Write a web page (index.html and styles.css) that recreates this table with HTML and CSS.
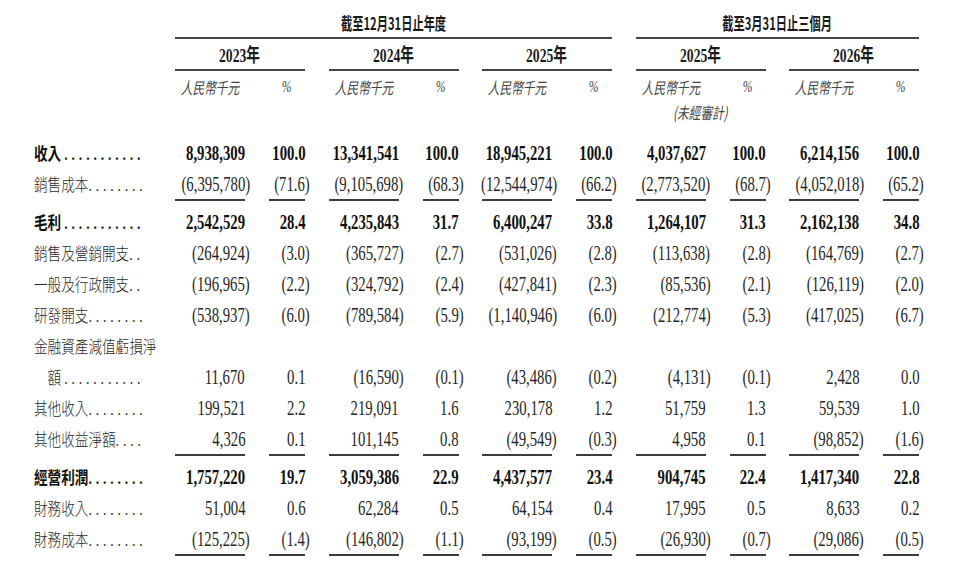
FILE: index.html
```html
<!DOCTYPE html>
<html>
  <head>
    <title>經營業績</title>
    <link rel="stylesheet" href="styles.css">
  </head>
  <body>
    <div class="sheet">
      <div class="row head-title">
        <div class="label"></div>
        <div class="title wide3"><span class="tt">截至12月31日止年度</span></div>
        <div class="title wide2"><span class="tt">截至3月31日止三個月</span></div>
      </div>
      <div class="row head-year">
        <div class="label"></div>
        <div class="year"><span class="yt">2023年</span></div>
        <div class="year"><span class="yt">2024年</span></div>
        <div class="year"><span class="yt">2025年</span></div>
        <div class="year"><span class="yt">2025年</span></div>
        <div class="year"><span class="yt">2026年</span></div>
      </div>
      <div class="row head-unit">
        <div class="label"></div>
        <div class="group"><div class="uh-amt"><span class="ut">人民幣千元</span></div><div class="uh-pct"><span class="ut pc">%</span></div></div>
        <div class="group"><div class="uh-amt"><span class="ut">人民幣千元</span></div><div class="uh-pct"><span class="ut pc">%</span></div></div>
        <div class="group"><div class="uh-amt"><span class="ut">人民幣千元</span></div><div class="uh-pct"><span class="ut pc">%</span></div></div>
        <div class="group"><div class="uh-amt"><span class="ut">人民幣千元</span></div><div class="uh-pct"><span class="ut pc">%</span></div></div>
        <div class="group"><div class="uh-amt"><span class="ut">人民幣千元</span></div><div class="uh-pct"><span class="ut pc">%</span></div></div>
      </div>
      <div class="row head-note">
        <div class="label"></div>
        <div class="note"></div>
        <div class="note"></div>
        <div class="note"></div>
        <div class="note"><span class="ut">(未經審計)</span></div>
        <div class="note"></div>
      </div>

      <div class="data">
        <div class="row b">
          <div class="label"><span class="lt">收入 <span class="dots">...........</span></span></div>
          <div class="group"><div class="amt"><span class="n">8,938,309</span></div><div class="pct"><span class="n">100.0</span></div></div>
          <div class="group"><div class="amt"><span class="n">13,341,541</span></div><div class="pct"><span class="n">100.0</span></div></div>
          <div class="group"><div class="amt"><span class="n">18,945,221</span></div><div class="pct"><span class="n">100.0</span></div></div>
          <div class="group"><div class="amt"><span class="n">4,037,627</span></div><div class="pct"><span class="n">100.0</span></div></div>
          <div class="group"><div class="amt"><span class="n">6,214,156</span></div><div class="pct"><span class="n">100.0</span></div></div>
        </div>
        <div class="row u">
          <div class="label"><span class="lt">銷售成本<span class="dots">........</span></span></div>
          <div class="group"><div class="amt"><span class="n">(6,395,780<span class="rp">)</span></span></div><div class="pct"><span class="n">(71.6<span class="rp">)</span></span></div></div>
          <div class="group"><div class="amt"><span class="n">(9,105,698<span class="rp">)</span></span></div><div class="pct"><span class="n">(68.3<span class="rp">)</span></span></div></div>
          <div class="group"><div class="amt"><span class="n">(12,544,974<span class="rp">)</span></span></div><div class="pct"><span class="n">(66.2<span class="rp">)</span></span></div></div>
          <div class="group"><div class="amt"><span class="n">(2,773,520<span class="rp">)</span></span></div><div class="pct"><span class="n">(68.7<span class="rp">)</span></span></div></div>
          <div class="group"><div class="amt"><span class="n">(4,052,018<span class="rp">)</span></span></div><div class="pct"><span class="n">(65.2<span class="rp">)</span></span></div></div>
        </div>
        <div class="row b">
          <div class="label"><span class="lt">毛利 <span class="dots">...........</span></span></div>
          <div class="group"><div class="amt"><span class="n">2,542,529</span></div><div class="pct"><span class="n">28.4</span></div></div>
          <div class="group"><div class="amt"><span class="n">4,235,843</span></div><div class="pct"><span class="n">31.7</span></div></div>
          <div class="group"><div class="amt"><span class="n">6,400,247</span></div><div class="pct"><span class="n">33.8</span></div></div>
          <div class="group"><div class="amt"><span class="n">1,264,107</span></div><div class="pct"><span class="n">31.3</span></div></div>
          <div class="group"><div class="amt"><span class="n">2,162,138</span></div><div class="pct"><span class="n">34.8</span></div></div>
        </div>
        <div class="row">
          <div class="label"><span class="lt">銷售及營銷開支<span class="dots">..</span></span></div>
          <div class="group"><div class="amt"><span class="n">(264,924<span class="rp">)</span></span></div><div class="pct"><span class="n">(3.0<span class="rp">)</span></span></div></div>
          <div class="group"><div class="amt"><span class="n">(365,727<span class="rp">)</span></span></div><div class="pct"><span class="n">(2.7<span class="rp">)</span></span></div></div>
          <div class="group"><div class="amt"><span class="n">(531,026<span class="rp">)</span></span></div><div class="pct"><span class="n">(2.8<span class="rp">)</span></span></div></div>
          <div class="group"><div class="amt"><span class="n">(113,638<span class="rp">)</span></span></div><div class="pct"><span class="n">(2.8<span class="rp">)</span></span></div></div>
          <div class="group"><div class="amt"><span class="n">(164,769<span class="rp">)</span></span></div><div class="pct"><span class="n">(2.7<span class="rp">)</span></span></div></div>
        </div>
        <div class="row">
          <div class="label"><span class="lt">一般及行政開支<span class="dots">..</span></span></div>
          <div class="group"><div class="amt"><span class="n">(196,965<span class="rp">)</span></span></div><div class="pct"><span class="n">(2.2<span class="rp">)</span></span></div></div>
          <div class="group"><div class="amt"><span class="n">(324,792<span class="rp">)</span></span></div><div class="pct"><span class="n">(2.4<span class="rp">)</span></span></div></div>
          <div class="group"><div class="amt"><span class="n">(427,841<span class="rp">)</span></span></div><div class="pct"><span class="n">(2.3<span class="rp">)</span></span></div></div>
          <div class="group"><div class="amt"><span class="n">(85,536<span class="rp">)</span></span></div><div class="pct"><span class="n">(2.1<span class="rp">)</span></span></div></div>
          <div class="group"><div class="amt"><span class="n">(126,119<span class="rp">)</span></span></div><div class="pct"><span class="n">(2.0<span class="rp">)</span></span></div></div>
        </div>
        <div class="row">
          <div class="label"><span class="lt">研發開支<span class="dots">........</span></span></div>
          <div class="group"><div class="amt"><span class="n">(538,937<span class="rp">)</span></span></div><div class="pct"><span class="n">(6.0<span class="rp">)</span></span></div></div>
          <div class="group"><div class="amt"><span class="n">(789,584<span class="rp">)</span></span></div><div class="pct"><span class="n">(5.9<span class="rp">)</span></span></div></div>
          <div class="group"><div class="amt"><span class="n">(1,140,946<span class="rp">)</span></span></div><div class="pct"><span class="n">(6.0<span class="rp">)</span></span></div></div>
          <div class="group"><div class="amt"><span class="n">(212,774<span class="rp">)</span></span></div><div class="pct"><span class="n">(5.3<span class="rp">)</span></span></div></div>
          <div class="group"><div class="amt"><span class="n">(417,025<span class="rp">)</span></span></div><div class="pct"><span class="n">(6.7<span class="rp">)</span></span></div></div>
        </div>
        <div class="row">
          <div class="label"><span class="lt">金融資產減值虧損淨</span></div>
        </div>
        <div class="row">
          <div class="label"><span class="lt">　額 <span class="dots">...........</span></span></div>
          <div class="group"><div class="amt"><span class="n">11,670</span></div><div class="pct"><span class="n">0.1</span></div></div>
          <div class="group"><div class="amt"><span class="n">(16,590<span class="rp">)</span></span></div><div class="pct"><span class="n">(0.1<span class="rp">)</span></span></div></div>
          <div class="group"><div class="amt"><span class="n">(43,486<span class="rp">)</span></span></div><div class="pct"><span class="n">(0.2<span class="rp">)</span></span></div></div>
          <div class="group"><div class="amt"><span class="n">(4,131<span class="rp">)</span></span></div><div class="pct"><span class="n">(0.1<span class="rp">)</span></span></div></div>
          <div class="group"><div class="amt"><span class="n">2,428</span></div><div class="pct"><span class="n">0.0</span></div></div>
        </div>
        <div class="row">
          <div class="label"><span class="lt">其他收入<span class="dots">........</span></span></div>
          <div class="group"><div class="amt"><span class="n">199,521</span></div><div class="pct"><span class="n">2.2</span></div></div>
          <div class="group"><div class="amt"><span class="n">219,091</span></div><div class="pct"><span class="n">1.6</span></div></div>
          <div class="group"><div class="amt"><span class="n">230,178</span></div><div class="pct"><span class="n">1.2</span></div></div>
          <div class="group"><div class="amt"><span class="n">51,759</span></div><div class="pct"><span class="n">1.3</span></div></div>
          <div class="group"><div class="amt"><span class="n">59,539</span></div><div class="pct"><span class="n">1.0</span></div></div>
        </div>
        <div class="row u">
          <div class="label"><span class="lt">其他收益淨額<span class="dots">....</span></span></div>
          <div class="group"><div class="amt"><span class="n">4,326</span></div><div class="pct"><span class="n">0.1</span></div></div>
          <div class="group"><div class="amt"><span class="n">101,145</span></div><div class="pct"><span class="n">0.8</span></div></div>
          <div class="group"><div class="amt"><span class="n">(49,549<span class="rp">)</span></span></div><div class="pct"><span class="n">(0.3<span class="rp">)</span></span></div></div>
          <div class="group"><div class="amt"><span class="n">4,958</span></div><div class="pct"><span class="n">0.1</span></div></div>
          <div class="group"><div class="amt"><span class="n">(98,852<span class="rp">)</span></span></div><div class="pct"><span class="n">(1.6<span class="rp">)</span></span></div></div>
        </div>
        <div class="row b">
          <div class="label"><span class="lt">經營利潤<span class="dots">........</span></span></div>
          <div class="group"><div class="amt"><span class="n">1,757,220</span></div><div class="pct"><span class="n">19.7</span></div></div>
          <div class="group"><div class="amt"><span class="n">3,059,386</span></div><div class="pct"><span class="n">22.9</span></div></div>
          <div class="group"><div class="amt"><span class="n">4,437,577</span></div><div class="pct"><span class="n">23.4</span></div></div>
          <div class="group"><div class="amt"><span class="n">904,745</span></div><div class="pct"><span class="n">22.4</span></div></div>
          <div class="group"><div class="amt"><span class="n">1,417,340</span></div><div class="pct"><span class="n">22.8</span></div></div>
        </div>
        <div class="row">
          <div class="label"><span class="lt">財務收入<span class="dots">........</span></span></div>
          <div class="group"><div class="amt"><span class="n">51,004</span></div><div class="pct"><span class="n">0.6</span></div></div>
          <div class="group"><div class="amt"><span class="n">62,284</span></div><div class="pct"><span class="n">0.5</span></div></div>
          <div class="group"><div class="amt"><span class="n">64,154</span></div><div class="pct"><span class="n">0.4</span></div></div>
          <div class="group"><div class="amt"><span class="n">17,995</span></div><div class="pct"><span class="n">0.5</span></div></div>
          <div class="group"><div class="amt"><span class="n">8,633</span></div><div class="pct"><span class="n">0.2</span></div></div>
        </div>
        <div class="row u">
          <div class="label"><span class="lt">財務成本<span class="dots">........</span></span></div>
          <div class="group"><div class="amt"><span class="n">(125,225<span class="rp">)</span></span></div><div class="pct"><span class="n">(1.4<span class="rp">)</span></span></div></div>
          <div class="group"><div class="amt"><span class="n">(146,802<span class="rp">)</span></span></div><div class="pct"><span class="n">(1.1<span class="rp">)</span></span></div></div>
          <div class="group"><div class="amt"><span class="n">(93,199<span class="rp">)</span></span></div><div class="pct"><span class="n">(0.5<span class="rp">)</span></span></div></div>
          <div class="group"><div class="amt"><span class="n">(26,930<span class="rp">)</span></span></div><div class="pct"><span class="n">(0.7<span class="rp">)</span></span></div></div>
          <div class="group"><div class="amt"><span class="n">(29,086<span class="rp">)</span></span></div><div class="pct"><span class="n">(0.5<span class="rp">)</span></span></div></div>
        </div>
      </div>
    </div>
  </body>
</html>
```

FILE: styles.css
```css
body {
  margin: 0;
  background: #fff;
  color: #222;
  font-family: "Liberation Serif", "Noto Sans CJK TC", serif;
}
.sheet {
  width: 953px;
}
.row {
  display: flex;
  column-gap: 23.5px;
}
.label {
  flex: none;
  width: 151.5px;
  padding-left: 34px;
  box-sizing: border-box;
  white-space: nowrap;
}
.group {
  flex: none;
  width: 130px;
  display: flex;
  justify-content: space-between;
}

/* headings */
.title {
  flex: none;
  display: flex;
  justify-content: center;
  align-items: center;
  height: 20px;
  padding-top: 13px;
  padding-bottom: 4px;
  border-bottom: 2px solid #444;
}
.wide3 {
  width: 437px;
}
.wide2 {
  width: 283.5px;
}
.tt {
  display: inline-block;
  font-family: "Noto Sans CJK TC", sans-serif;
  font-size: 17px;
  line-height: 20px;
  font-weight: bold;
  color: #1a1a1a;
  white-space: nowrap;
  transform: scaleX(0.66);
}
.year {
  flex: none;
  display: flex;
  justify-content: center;
  align-items: center;
  width: 130px;
  height: 20px;
  padding-top: 7px;
  padding-bottom: 3px;
  border-bottom: 2px solid #444;
}
.yt {
  display: inline-block;
  font-size: 19px;
  line-height: 20px;
  font-weight: bold;
  color: #1a1a1a;
  white-space: nowrap;
  transform: scaleX(0.72);
}
.head-unit .group {
  padding-top: 6px;
}
.uh-amt,
.uh-pct {
  display: flex;
  justify-content: center;
  align-items: center;
  height: 20px;
}
.uh-amt {
  width: 70px;
}
.uh-pct {
  width: 36px;
}
.ut {
  display: inline-block;
  font-family: "Noto Sans CJK TC", sans-serif;
  font-size: 16px;
  line-height: 20px;
  font-style: italic;
  color: #444;
  white-space: nowrap;
  transform: scaleX(0.73);
}
.ut.pc {
  font-family: "Liberation Serif", serif;
}
.head-note .note {
  flex: none;
  display: flex;
  justify-content: center;
  align-items: center;
  width: 130px;
  height: 20px;
  padding-top: 5px;
}

/* figures */
.data {
  margin-top: 15px;
}
.data .row {
  height: 31px;
}
.data .label {
  font-family: "Noto Sans CJK TC", sans-serif;
  font-size: 17px;
  line-height: 31px;
  height: 31px;
}
.lt {
  display: inline-block;
  font-weight: 300;
  color: #2a2a2a;
  transform: scaleX(0.8);
  transform-origin: left center;
}
.dots {
  font-family: "Liberation Serif", serif;
  line-height: 1;
  letter-spacing: 4.85px;
}
.amt,
.pct {
  direction: rtl;
  font-size: 22px;
  line-height: 31px;
  height: 31px;
  white-space: nowrap;
}
.amt {
  width: 70px;
}
.pct {
  width: 36px;
}
.n {
  direction: ltr;
  display: inline-block;
  color: #262626;
  transform: scaleX(0.67);
  transform-origin: right center;
}
.rp {
  margin-right: -0.333em;
}
.b .n {
  font-weight: bold;
  color: #111;
}
.b .lt {
  font-weight: bold;
  color: #111;
}
.data .row.u {
  height: 34px;
  margin-bottom: 4px;
}
.u .amt,
.u .pct {
  border-bottom: 2px solid #3c3c3c;
}
```
